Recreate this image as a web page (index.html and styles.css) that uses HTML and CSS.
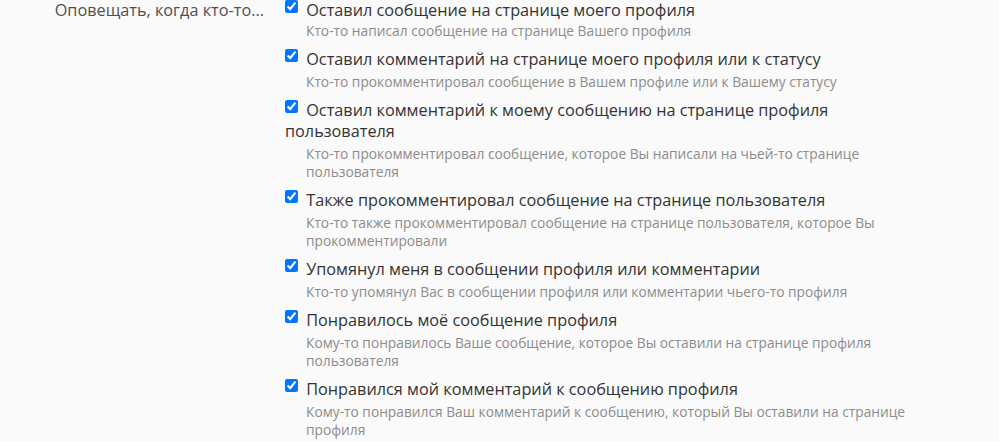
FILE: index.html
```html
<!DOCTYPE html>
<html lang="ru">
<head>
<meta charset="utf-8">
<link rel="stylesheet" href="styles.css">
</head>
<body>
<div class="form-row">
  <div class="row-label">Оповещать, когда кто-то...</div>
  <ul class="choices">
    <li class="choice">
      <label class="choice-label"><input type="checkbox" checked> Оставил сообщение на странице моего профиля</label>
      <div class="hint">Кто-то написал сообщение на странице Вашего профиля</div>
    </li>
    <li class="choice">
      <label class="choice-label"><input type="checkbox" checked> Оставил комментарий на странице моего профиля или к статусу</label>
      <div class="hint">Кто-то прокомментировал сообщение в Вашем профиле или к Вашему статусу</div>
    </li>
    <li class="choice">
      <label class="choice-label"><input type="checkbox" checked> Оставил комментарий к моему сообщению на странице профиля пользователя</label>
      <div class="hint">Кто-то прокомментировал сообщение, которое Вы написали на чьей-то странице пользователя</div>
    </li>
    <li class="choice">
      <label class="choice-label"><input type="checkbox" checked> Также прокомментировал сообщение на странице пользователя</label>
      <div class="hint">Кто-то также прокомментировал сообщение на странице пользователя, которое Вы прокомментировали</div>
    </li>
    <li class="choice">
      <label class="choice-label"><input type="checkbox" checked> Упомянул меня в сообщении профиля или комментарии</label>
      <div class="hint">Кто-то упомянул Вас в сообщении профиля или комментарии чьего-то профиля</div>
    </li>
    <li class="choice">
      <label class="choice-label"><input type="checkbox" checked> Понравилось моё сообщение профиля</label>
      <div class="hint">Кому-то понравилось Ваше сообщение, которое Вы оставили на странице профиля пользователя</div>
    </li>
    <li class="choice">
      <label class="choice-label"><input type="checkbox" checked> Понравился мой комментарий к сообщению профиля</label>
      <div class="hint">Кому-то понравился Ваш комментарий к сообщению, который Вы оставили на странице профиля</div>
    </li>
  </ul>
</div>
</body>
</html>
```
FILE: styles.css
```css
html, body {
  margin: 0;
  padding: 0;
  background: #fafafa;
}
body {
  font-family: "Open Sans", "Liberation Sans", sans-serif;
  color: #141414;
}
.form-row {
  display: grid;
  grid-template-columns: 270px 645px;
}
.row-label {
  text-align: right;
  padding-right: 6px;
  font-size: 16.25px;
  line-height: 21px;
  color: #505050;
}
.choices {
  list-style: none;
  margin: 0;
  padding: 0 0 0 15px;
  display: flex;
  flex-direction: column;
  gap: 9px;
}
.choice-label {
  display: block;
  font-size: 16.25px;
  line-height: 21px;
  color: #333;
}
.choice-label input {
  margin: 0 4px 0 0;
  width: 13px;
  height: 13px;
  vertical-align: 3px;
}
.hint {
  padding-left: 21px;
  margin-top: 3px;
  font-size: 13.75px;
  line-height: 18px;
  color: #8c8c8c;
}
.choice:first-child .hint {
  margin-top: 1px;
}
```
